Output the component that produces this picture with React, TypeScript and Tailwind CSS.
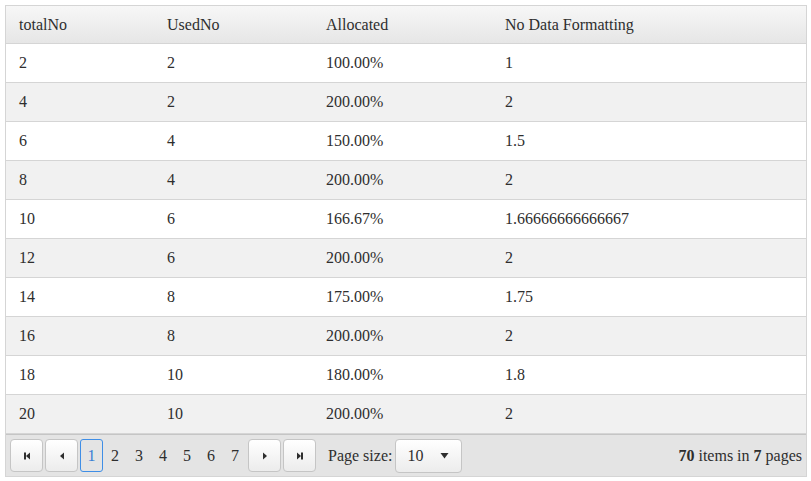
import React from "react";

const rows: [string, string, string, string][] = [
  ["2", "2", "100.00%", "1"],
  ["4", "2", "200.00%", "2"],
  ["6", "4", "150.00%", "1.5"],
  ["8", "4", "200.00%", "2"],
  ["10", "6", "166.67%", "1.66666666666667"],
  ["12", "6", "200.00%", "2"],
  ["14", "8", "175.00%", "1.75"],
  ["16", "8", "200.00%", "2"],
  ["18", "10", "180.00%", "1.8"],
  ["20", "10", "200.00%", "2"],
];

const cols = "grid grid-cols-[148px_159px_179px_1fr]";

function NavBtn({ kind }: { kind: "first" | "prev" | "next" | "last" }) {
  return (
    <div className="w-[33px] h-[33px] rounded-[4px] border border-[#c5c5c5] bg-gradient-to-b from-white to-[#ececec] flex items-center justify-center">
      <svg width="10" height="10" viewBox="0 0 10 10">
        {kind === "first" && (
          <>
            <rect x="2" y="1.5" width="2" height="7" fill="#2e2e2e" />
            <path d="M8 1.5 L4 5 L8 8.5 Z" fill="#2e2e2e" />
          </>
        )}
        {kind === "prev" && <path d="M7 1.5 L3 5 L7 8.5 Z" fill="#2e2e2e" />}
        {kind === "next" && <path d="M3 1.5 L7 5 L3 8.5 Z" fill="#2e2e2e" />}
        {kind === "last" && (
          <>
            <path d="M2 1.5 L6 5 L2 8.5 Z" fill="#2e2e2e" />
            <rect x="6" y="1.5" width="2" height="7" fill="#2e2e2e" />
          </>
        )}
      </svg>
    </div>
  );
}

export default function App() {
  return (
    <div
      className="w-[811px] h-[481px] bg-white pt-[5px] pl-[5px] text-[16px] text-[#2e2e2e]"
      style={{ fontFamily: '"Liberation Serif", "Times New Roman", serif' }}
    >
      <div className="w-[802px] border border-[#d5d5d5]">
        <div className={`${cols} h-[38px] border-b border-[#d5d5d5] bg-gradient-to-b from-[#f7f7f7] to-[#e6e6e6]`}>
          {["totalNo", "UsedNo", "Allocated", "No Data Formatting"].map((h) => (
            <div key={h} className="pl-[13px] flex items-center">
              {h}
            </div>
          ))}
        </div>
        {rows.map((r, i) => (
          <div
            key={i}
            className={`${cols} h-[39px] border-b border-[#d5d5d5] ${i % 2 === 1 ? "bg-[#f1f1f1]" : "bg-white"}`}
          >
            {r.map((c, j) => (
              <div key={j} className="pl-[13px] flex items-center">
                {c}
              </div>
            ))}
          </div>
        ))}
        <div className="h-[42px] border-t border-[#c5c5c5] bg-[#e4e4e4] flex items-center pl-[4px] pr-[4px]">
          <div className="flex items-center gap-[2px]">
            <NavBtn kind="first" />
            <NavBtn kind="prev" />
          </div>
          <div className="flex items-center ml-[2px]">
            <div className="w-[23px] h-[33px] rounded-[3px] border border-[#3f8ee6] flex items-center justify-center text-[#3a7fd5]">
              1
            </div>
            {["2", "3", "4", "5", "6", "7"].map((n) => (
              <div key={n} className="w-[24px] h-[33px] flex items-center justify-center">
                {n}
              </div>
            ))}
          </div>
          <div className="flex items-center gap-[2px] ml-[1px]">
            <NavBtn kind="next" />
            <NavBtn kind="last" />
          </div>
          <span className="ml-[12px]">Page size:</span>
          <div className="ml-[3px] w-[67px] h-[34px] rounded-[4px] border border-[#c5c5c5] bg-gradient-to-b from-white to-[#ececec] flex items-center pl-[11px] pr-[12px] justify-between">
            <span>10</span>
            <svg width="9" height="7" viewBox="0 0 9 7">
              <path d="M0.5 1 L8.5 1 L4.5 6.5 Z" fill="#2e2e2e" />
            </svg>
          </div>
          <div className="ml-auto">
            <b>70</b> items in <b>7</b> pages
          </div>
        </div>
      </div>
    </div>
  );
}
